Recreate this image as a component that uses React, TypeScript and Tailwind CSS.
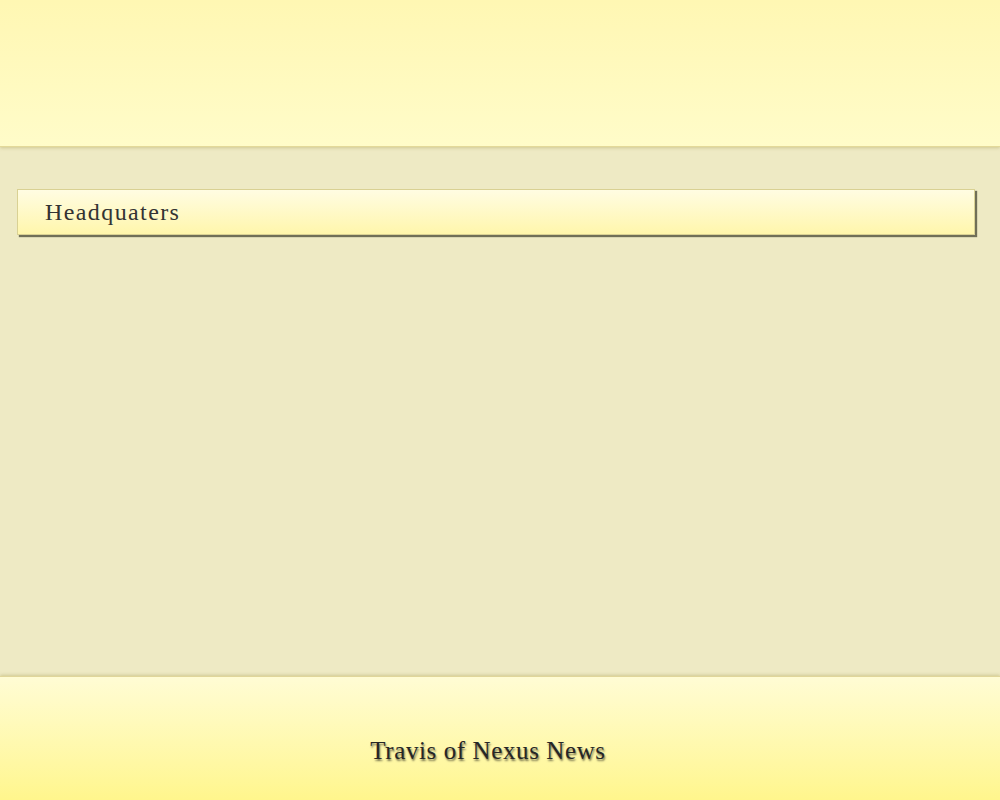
import React from "react";

export default function App() {
  return (
    <div className="flex h-[800px] w-[1000px] flex-col overflow-hidden bg-[#eeeac4]" style={{ fontFamily: '"Liberation Serif", "DejaVu Serif", serif' }}>
      <header className="h-[147px] shrink-0 border-b border-[#e3d999] bg-gradient-to-b from-[#fff7b3] to-[#fffcc9] shadow-[0_1px_3px_rgba(180,170,100,0.5)]" />
      <main className="flex-1 pl-[17px] pr-[25px] pt-[42px]">
        <div className="flex h-[46px] items-center border border-[#d9d193] bg-gradient-to-b from-[#fffce2] to-[#fff6ab] pl-[27px] shadow-[2px_2px_1px_rgba(80,80,60,0.8)]">
          <span className="text-[24px] tracking-[1.4px] text-[#333333]">Headquaters</span>
        </div>
      </main>
      <footer className="flex h-[124px] shrink-0 items-center justify-center border-t border-[#e0d69a] bg-gradient-to-b from-[#fffcd4] to-[#fff68c] pr-[24px] pt-[25px] shadow-[0_-1px_3px_rgba(180,170,100,0.5)]">
        <span className="text-[25px] tracking-[0.6px] text-[#262626] [text-shadow:1px_2px_2px_rgba(0,0,0,0.55)]">Travis of Nexus News</span>
      </footer>
    </div>
  );
}
